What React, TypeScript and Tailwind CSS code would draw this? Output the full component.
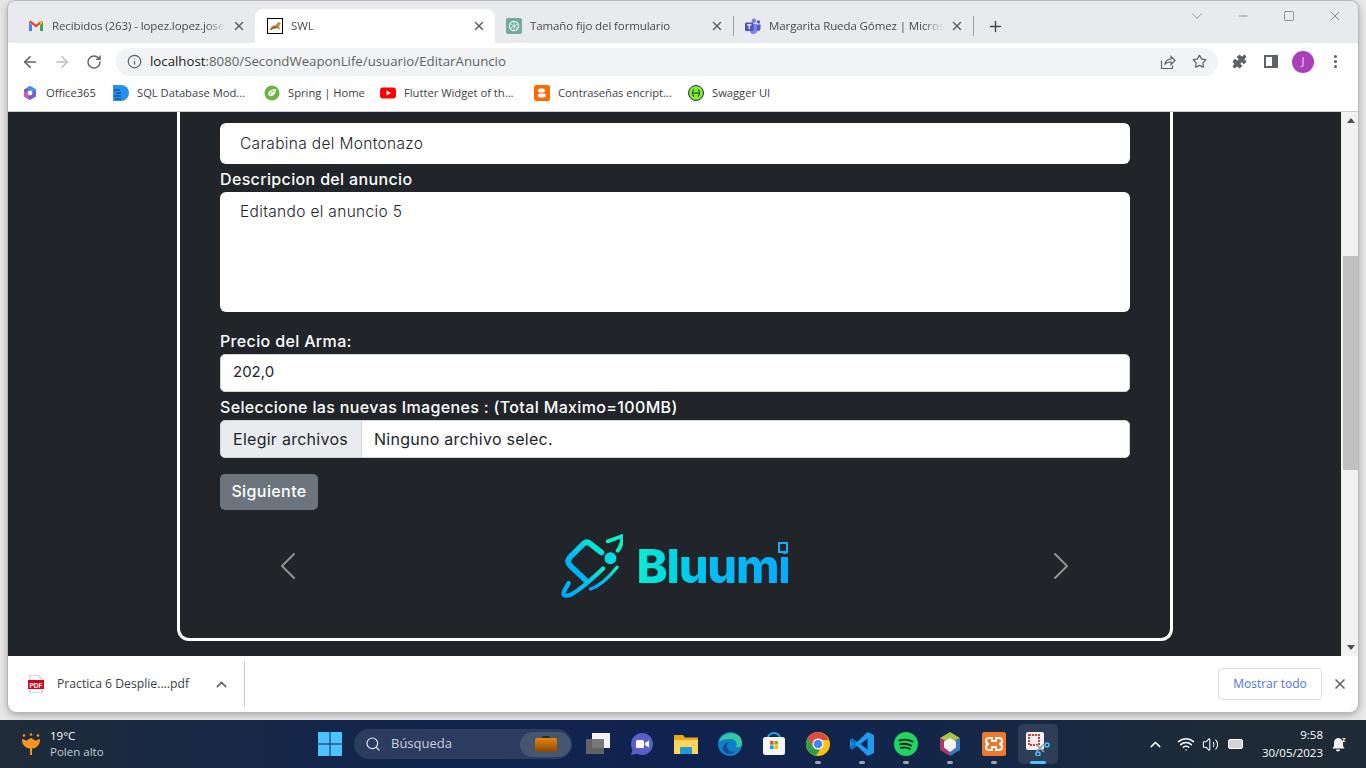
import React from "react";
import {
  ArrowLeft,
  ArrowRight,
  ChevronDown,
  ChevronUp,
  Info,
  Minus,
  MoreVertical,
  Plus,
  Puzzle,
  RotateCw,
  Search,
  Square,
  Star,
  Volume2,
  Wifi,
  X,
} from "lucide-react";

const tabs = [
  { title: "Recibidos (263) - lopez.lopez.jose", icon: "gmail", sep: false, box: "w-[238px] pl-[11px] pr-[9px]" },
  { title: "SWL", icon: "tomcat", sep: false, box: "w-[240px] rounded-t-lg bg-white pl-[12px] pr-[9px]" },
  { title: "Tamaño fijo del formulario", icon: "gpt", sep: true, box: "w-[238px] pl-[11px] pr-[10px]" },
  { title: "Margarita Rueda Gómez | Microsoft Teams", icon: "teams", sep: true, box: "w-[240px] pl-[12px] pr-[10px]" },
];

const bookmarks = [
  { title: "Office365", icon: "office", width: "w-[51px]" },
  { title: "SQL Database Mod...", icon: "sql", width: "w-[111px]" },
  { title: "Spring | Home", icon: "spring", width: "w-[76px]" },
  { title: "Flutter Widget of th...", icon: "youtube", width: "w-[114px]" },
  { title: "Contraseñas encript...", icon: "blogger", width: "w-[114px]" },
  { title: "Swagger UI", icon: "swagger", width: "w-[60px]" },
];

function Favicon({ name }: { name: string }) {
  switch (name) {
    case "gmail":
      return (
        <svg viewBox="0 0 16 16" className="h-4 w-4 shrink-0">
          <path d="M1 4v9h3V7z" fill="#4285f4" />
          <path d="M12 7v6h3V4z" fill="#34a853" />
          <path d="M1 4l7 5.5L15 4l-1.5-1.5L8 6.5 2.5 2.5z" fill="#ea4335" />
          <path d="M12 4.2l1.5-1.7L15 4l-3 3z" fill="#fbbc04" />
        </svg>
      );
    case "tomcat":
      return (
        <svg viewBox="0 0 16 16" className="h-4 w-4 shrink-0">
          <rect x="0.5" y="0.5" width="15" height="15" fill="#fff" stroke="#000" />
          <path d="M2 12l3-4 4-1 2-3 3 1-2 3 1 4-3-2-3 1z" fill="#b8893e" />
          <path d="M4 12l3-3 3 1" stroke="#6b5a30" fill="none" />
        </svg>
      );
    case "gpt":
      return (
        <svg viewBox="0 0 16 16" className="h-4 w-4 shrink-0">
          <rect width="16" height="16" rx="2" fill="#74aa9c" />
          <circle cx="8" cy="8" r="4.6" fill="none" stroke="#e6f2ef" strokeWidth="1.3" />
          <path d="M8 3.5v9M4 5.7l8 4.6M12 5.7l-8 4.6" stroke="#e6f2ef" strokeWidth="0.8" />
        </svg>
      );
    case "teams":
      return (
        <svg viewBox="0 0 16 16" className="h-4 w-4 shrink-0">
          <circle cx="9" cy="2.8" r="2.3" fill="#7b83eb" />
          <circle cx="13.5" cy="4" r="1.7" fill="#5059c9" />
          <path d="M11 6.5h4.5v4.2a2.4 2.4 0 01-4.5 1z" fill="#5059c9" />
          <path d="M4.5 6h7.5v6.2a3.4 3.4 0 01-7 .8z" fill="#7b83eb" />
          <rect x="0" y="4.5" width="8.5" height="8.5" rx="1" fill="#4b53bc" />
          <path d="M2 6.8h4.5M4.25 6.8v4.4" stroke="#fff" strokeWidth="1.2" />
        </svg>
      );
    case "office":
      return (
        <svg viewBox="0 0 16 16" className="h-4 w-4 shrink-0">
          <path d="M8 1l6 3.5v7L8 15l-6-3.5v-7z" fill="#7b5ad6" />
          <path d="M8 1l6 3.5L10 7 5 3z" fill="#3a9be8" />
          <path d="M2 11.5V6l4 3v3.5L8 15z" fill="#d65bb0" />
          <circle cx="8" cy="8" r="2.4" fill="#fff" />
        </svg>
      );
    case "sql":
      return (
        <svg viewBox="0 0 16 16" className="h-4 w-4 shrink-0">
          <circle cx="8" cy="8" r="8" fill="#2490f0" />
          <rect x="0" y="0" width="8" height="16" fill="#2490f0" />
          <path d="M1 5h6M3 8h5M1 11h7M2 14h6" stroke="#123a70" strokeWidth="1" />
        </svg>
      );
    case "spring":
      return (
        <svg viewBox="0 0 16 16" className="h-4 w-4 shrink-0">
          <circle cx="8" cy="8" r="7.5" fill="#6db33f" />
          <path d="M4 11c-1-4 3-7 8-7 0 5-3 8-7 7" fill="#fff" />
          <path d="M4 12c1-3 3-5 6-6" stroke="#6db33f" fill="none" />
        </svg>
      );
    case "youtube":
      return (
        <svg viewBox="0 0 16 16" className="h-4 w-4 shrink-0">
          <rect y="2.5" width="16" height="11" rx="3" fill="#f00" />
          <path d="M6.5 5.5v5L11 8z" fill="#fff" />
        </svg>
      );
    case "blogger":
      return (
        <svg viewBox="0 0 16 16" className="h-4 w-4 shrink-0">
          <rect width="16" height="16" rx="2.5" fill="#ff6a00" />
          <rect x="4" y="3.5" width="7" height="4" rx="2" fill="#fff" />
          <rect x="4" y="8.5" width="8" height="4" rx="2" fill="#fff" />
        </svg>
      );
    default:
      return (
        <svg viewBox="0 0 16 16" className="h-4 w-4 shrink-0">
          <circle cx="8" cy="8" r="7.5" fill="#85ea2d" stroke="#173647" />
          <path d="M6 4.5c-2 0 0 3.5-2 3.5 2 0 0 3.5 2 3.5M10 4.5c2 0 0 3.5 2 3.5-2 0 0 3.5-2 3.5M4.5 8h7" stroke="#173647" fill="none" />
        </svg>
      );
  }
}

function TabStrip() {
  return (
    <div className="flex h-[42px] shrink-0 items-end bg-[#e8eaed] pl-[9px]">
      {tabs.map((t) => (
        <div key={t.title} className={"flex h-[34px] items-center " + t.box}>
          <Favicon name={t.icon} />
          <span className="ml-[8px] flex-1 overflow-hidden text-[11.5px] tracking-[-0.1px] whitespace-nowrap text-[#45494e] [mask-image:linear-gradient(90deg,#000_88%,transparent)]">
            {t.title}
          </span>
          <X className="ml-[6px] h-[14px] w-[14px] shrink-0 text-[#5f6368]" strokeWidth={2.5} />
          {t.sep && <span className="mr-[-11px] ml-[9px] h-[20px] w-px bg-[#9aa0a6]" />}
        </div>
      ))}
      <div className="flex h-[34px] w-[44px] items-center justify-center">
        <Plus className="h-[17px] w-[17px] text-[#45494e]" strokeWidth={2} />
      </div>
      <div className="flex h-[42px] flex-1 items-start justify-end">
        <div className="flex h-[30px] w-[46px] items-center justify-center">
          <ChevronDown className="h-[18px] w-[18px] text-[#7b7d80]" strokeWidth={1} />
        </div>
        <div className="flex h-[30px] w-[46px] items-center justify-center">
          <Minus className="h-[14px] w-[14px] text-[#55585c]" strokeWidth={1} />
        </div>
        <div className="flex h-[30px] w-[46px] items-center justify-center">
          <Square className="h-[12px] w-[12px] text-[#55585c]" strokeWidth={1.2} />
        </div>
        <div className="flex h-[30px] w-[46px] items-center justify-center">
          <X className="h-[16px] w-[16px] text-[#55585c]" strokeWidth={1} />
        </div>
      </div>
    </div>
  );
}

function Toolbar() {
  return (
    <div className="flex h-[37px] shrink-0 items-center bg-white pl-[13px] text-[#5f6368]">
      <ArrowLeft className="h-[18px] w-[18px]" strokeWidth={2.2} />
      <ArrowRight className="ml-[14px] h-[18px] w-[18px] text-[#bdc1c6]" strokeWidth={2.2} />
      <RotateCw className="ml-[15px] h-[16px] w-[16px]" strokeWidth={2.2} />
      <div className="ml-[14px] flex h-[28px] w-[1102px] items-center rounded-full bg-[#f1f3f4] pr-[11px] pl-[11px]">
        <Info className="h-[15px] w-[15px]" strokeWidth={2} />
        <span className="ml-[8px] flex-1 text-[13.25px] text-[#5f6368]">
          <span className="text-[#202124]">localhost</span>:8080/SecondWeaponLife/usuario/EditarAnuncio
        </span>
        <svg viewBox="0 0 16 16" className="h-[16px] w-[16px]" fill="none" stroke="#5f6368" strokeWidth="1.2">
          <path d="M1.5 6.5v8h11v-3M5 10c.5-3 3-5 6-5V2.500l4 4-4 4V8c-2.500 0-4.500.5-6 2z" />
        </svg>
        <Star className="ml-[16px] h-[15px] w-[15px]" strokeWidth={2} />
      </div>
      <Puzzle className="ml-[14px] h-[15px] w-[15px] fill-[#5f6368]" strokeWidth={1.5} />
      <div className="ml-[17px] flex h-[13px] w-[14px] justify-end border-[2px] border-[#5f6368]">
        <div className="h-full w-[4px] bg-[#5f6368]" />
      </div>
      <div className="ml-[14px] flex h-[22px] w-[22px] items-center justify-center rounded-full bg-[#a93fbb] text-[11px] text-[#f3d9f7]">
        J
      </div>
      <MoreVertical className="ml-[13px] h-[17px] w-[17px]" strokeWidth={2.4} />
    </div>
  );
}

function BookmarkBar() {
  return (
    <div className="flex h-[32px] shrink-0 items-center gap-[16px] border-b border-[#c9cbcf] bg-white pb-[5px] pl-[14px]">
      {bookmarks.map((b) => (
        <div key={b.title} className="flex items-center gap-[8px]">
          <Favicon name={b.icon} />
          <span className={"text-[11.2px] whitespace-nowrap text-[#3c4043] " + b.width}>{b.title}</span>
        </div>
      ))}
    </div>
  );
}

function BluumiLogo() {
  return (
    <div className="mr-[2px] flex h-[66px] items-center">
      <svg viewBox="60 40 190 200" className="h-[67px] w-[63px]" fill="none" strokeLinecap="round" strokeLinejoin="round">
        <defs>
          <linearGradient id="rocket" x1="0" y1="1" x2="1" y2="0">
            <stop offset="0" stopColor="#00a4ff" />
            <stop offset="0.55" stopColor="#00c8f0" />
            <stop offset="1" stopColor="#0cf0c8" />
          </linearGradient>
        </defs>
        <path d="M185 98L152 72Q140 62 130 72L90 112Q78 125 90 137L136 180" stroke="url(#rocket)" strokeWidth="17" />
        <path d="M86 190L72 215Q66 232 86 227Q112 220 190 146" stroke="url(#rocket)" strokeWidth="13" />
        <path d="M152 208Q190 195 232 142" stroke="url(#rocket)" strokeWidth="10" />
        <path d="M204 64L248 48Q248 75 234 92" stroke="#10ecc8" strokeWidth="12" />
        <circle cx="212" cy="115" r="18" fill="#08d8e0" />
      </svg>
      <div className="relative ml-[14px] h-[66px] w-[151px]">
        <span className="block bg-linear-to-r from-[#0cecd4] via-[#06bdf4] to-[#08aaff] bg-clip-text text-[47px] leading-[66px] font-extrabold tracking-[-1.2px] text-transparent">
          Bluumi
        </span>
        <span className="absolute top-[9px] right-0 h-[11px] w-[10px] border-[2px] border-[#18acf0] bg-[#212529]" />
      </div>
    </div>
  );
}

function CarouselArrow({ d }: { d: string }) {
  return (
    <svg viewBox="0 0 16 16" className="h-[32px] w-[32px] fill-white/50">
      <path d={d} />
    </svg>
  );
}

function FormCard() {
  return (
    <div className="ml-[169px] flex h-[529px] w-[996px] flex-col rounded-b-xl border-x-[3px] border-b-[3px] border-white px-[40px] pt-[11px] font-['Inter',sans-serif] text-white">
      <div className="flex h-[41px] items-center rounded-md bg-white pl-[20px] text-[15.5px] font-light tracking-[0.33px] text-[#212529]">
        Carabina del Montonazo
      </div>
      <label className="mt-[4px] text-[16px] leading-[23px] font-[450] tracking-[0.35px]">Descripcion del anuncio</label>
      <div className="mt-[1px] h-[120px] rounded-md bg-white pt-[8px] pl-[20px] text-[15.5px] font-light tracking-[0.33px] text-[#212529]">
        Editando el anuncio 5
      </div>
      <label className="mt-[18px] text-[16px] leading-[23px] font-[450] tracking-[0.35px]">Precio del Arma:</label>
      <div className="mt-[1px] flex h-[38px] items-center rounded-[5px] border border-[#ced4da] bg-white pb-[1px] pl-[12px] text-[15px] text-[#212529]">
        202,0
      </div>
      <label className="mt-[4px] text-[16px] leading-[23px] font-[450] tracking-[0.35px]">
        Seleccione las nuevas Imagenes : (Total Maximo=100MB)
      </label>
      <div className="mt-[1px] flex h-[38px] items-stretch overflow-hidden rounded-[5px] border border-[#ced4da] bg-white text-[16px] tracking-[0.27px] text-[#212529]">
        <div className="flex w-[141px] items-center border-r border-[#ced4da] bg-[#e9ecef] pb-[1px] pl-[12px]">
          Elegir archivos
        </div>
        <div className="flex items-center pb-[1px] pl-[12px]">Ninguno archivo selec.</div>
      </div>
      <button className="mt-[16px] h-[36px] w-[98px] rounded-[5px] bg-[#6c757d] pb-[2px] text-center text-[16px] font-[450] tracking-[0.4px] text-white">
        Siguiente
      </button>
      <div className="mt-[23px] flex items-center justify-between pr-[53px] pl-[52px]">
        <CarouselArrow d="M11.354 1.646a.5.5 0 0 1 0 .708L5.707 8l5.647 5.646a.5.5 0 0 1-.708.708l-6-6a.5.5 0 0 1 0-.708l6-6a.5.5 0 0 1 .708 0z" />
        <BluumiLogo />
        <CarouselArrow d="M4.646 1.646a.5.5 0 0 1 .708 0l6 6a.5.5 0 0 1 0 .708l-6 6a.5.5 0 0 1-.708-.708L10.293 8 4.646 2.354a.5.5 0 0 1 0-.708z" />
      </div>
    </div>
  );
}

function Scrollbar() {
  return (
    <div className="flex w-[17px] shrink-0 flex-col items-end bg-[#f1f1f1]">
      <div className="flex h-[17px] w-[15px] items-center justify-center">
        <div className="h-0 w-0 border-x-[4px] border-b-[5px] border-x-transparent border-b-[#505050]" />
      </div>
      <div className="mt-[127px] h-[214px] w-[15px] bg-[#c1c1c1]" />
      <div className="flex-1" />
      <div className="flex h-[17px] w-[15px] items-center justify-center">
        <div className="h-0 w-0 border-x-[4px] border-t-[5px] border-x-transparent border-t-[#505050]" />
      </div>
    </div>
  );
}

function DownloadBar() {
  return (
    <div className="flex h-[56px] shrink-0 items-center rounded-b-lg bg-white pl-[20px]">
      <svg viewBox="0 0 16 18" className="h-[18px] w-[16px]">
        <path d="M2 0h8l4 4v14H2z" fill="#fff" stroke="#b9b9b9" />
        <rect x="0" y="5" width="16" height="9" fill="#d8001c" />
        <text x="8" y="12.5" textAnchor="middle" fontSize="6.5" fontWeight="700" fill="#fff" fontFamily="Liberation Sans">
          PDF
        </text>
      </svg>
      <span className="ml-[13px] w-[140px] text-[12.2px] whitespace-nowrap text-[#3c4043]">Practica 6 Desplie....pdf</span>
      <ChevronUp className="ml-[16px] h-[17px] w-[17px] text-[#5f6368]" strokeWidth={2.2} />
      <div className="ml-[14px] h-[44px] w-px bg-[#c8c9cb]" />
      <div className="flex-1" />
      <div className="flex h-[32px] w-[104px] items-center justify-center rounded-[4px] border border-[#dadce0] text-[12px] font-medium text-[#4e72e8]">
        Mostrar todo
      </div>
      <X className="mr-[10px] ml-[10px] h-[16px] w-[16px] text-[#5f6368]" strokeWidth={2.5} />
    </div>
  );
}

function TaskIcon({ dot, active, children }: { dot?: boolean; active?: boolean; children: React.ReactNode }) {
  return (
    <div
      className={
        active
          ? "relative ml-[2px] flex h-[40px] w-[40px] items-center justify-center rounded-[5px] bg-white/10"
          : "relative flex h-[40px] w-[44px] items-center justify-center"
      }
    >
      {children}
      {dot && <span className="absolute bottom-0 h-[3px] w-[6px] rounded-full bg-[#9ba4b0]" />}
      {active && <span className="absolute bottom-0 h-[3px] w-[16px] rounded-full bg-[#4cc2ff]" />}
    </div>
  );
}

function Taskbar() {
  return (
    <div className="flex h-[48px] shrink-0 items-center bg-[linear-gradient(90deg,#202c39_0%,#14264a_22%,#0f2350_50%,#142747_72%,#1e2a36_90%)] pl-[22px] text-white">
      <svg viewBox="0 0 18 22" className="h-[22px] w-[18px]">
        <circle cx="2" cy="2.5" r="1.3" fill="#f7931e" />
        <circle cx="9" cy="1.5" r="1.3" fill="#f7931e" />
        <circle cx="16" cy="2.5" r="1.3" fill="#f7931e" />
        <path d="M0 6c2 0 2.500 1.500 4.500 1.500S7 5 9 5s2.500 2.500 4.500 2.500S16 6 18 6c0 6-3 9-8 9.500V22H8v-6.500C3 15 0 12 0 6z" fill="#f7931e" />
      </svg>
      <div className="ml-[10px] w-[268px] text-[11.5px] leading-[16px]">
        <div>19°C</div>
        <div className="text-[#c8ccd2]">Polen alto</div>
      </div>
      <svg viewBox="0 0 24 24" className="h-[24px] w-[24px]">
        <path d="M0 0h11.500v11.500H0zM12.500 0H24v11.500H12.500zM0 12.500h11.500V24H0zM12.500 12.500H24V24H12.500z" fill="#4cc2ff" />
      </svg>
      <div className="ml-[12px] flex h-[30px] w-[218px] items-center rounded-full bg-[#2c3b60] pl-[11px]">
        <Search className="h-[16px] w-[16px] text-[#e4e7ec]" strokeWidth={1.8} />
        <span className="ml-[10px] w-[129px] text-[13px] text-[#cdd2da]">Búsqueda</span>
        <div className="flex h-[25px] w-[51px] flex-col items-center justify-center rounded-full bg-[#45566e]">
          <div className="h-[2px] w-[8px] rounded-t-[2px] bg-[#2a2a2a]" />
          <div className="h-[14px] w-[22px] rounded-[2px] bg-linear-to-b from-[#e8860f] to-[#8a4a08]" />
        </div>
      </div>
      <div className="ml-[4px] flex items-center">
        <TaskIcon>
          <svg viewBox="0 0 24 22" className="h-[22px] w-[24px]">
            <rect x="6" y="0" width="18" height="15" fill="#f3f3f3" />
            <rect x="0" y="6" width="18" height="15" fill="#6a6a6a" opacity="0.9" />
          </svg>
        </TaskIcon>
        <TaskIcon>
          <svg viewBox="0 0 24 24" className="h-[24px] w-[24px]">
            <path d="M12 1a11 11 0 11-5 20.800L1 23l1.500-5.500A11 11 0 0112 1z" fill="#5b5fc7" />
            <rect x="6" y="8" width="8" height="8" rx="1.500" fill="#fff" />
            <path d="M15 11l4-2.500v7L15 13z" fill="#fff" />
          </svg>
        </TaskIcon>
        <TaskIcon>
          <svg viewBox="0 0 24 22" className="h-[22px] w-[24px]">
            <path d="M0 2h9l2 2.500h13V21H0z" fill="#e8a818" />
            <rect x="0" y="7" width="24" height="14" fill="#ffd45c" />
            <rect x="6" y="14" width="12" height="7" rx="1" fill="#1b9ad6" />
          </svg>
        </TaskIcon>
        <TaskIcon>
          <svg viewBox="0 0 24 24" className="h-[24px] w-[24px]">
            <circle cx="12" cy="12" r="12" fill="#0f7fc8" />
            <path d="M1 10C3 2 13-1 20 3c3 2 4 5 4 9 0 3-3 4-6 3 2-4-1-8-6-8-5 0-9 1-11 3z" fill="#35c8a0" />
            <path d="M9 14c0 4 4 7 9 5-5 5-12 3-13-2 0-4 3-7 7-7-2 1-3 2-3 4z" fill="#0b4f9a" />
          </svg>
        </TaskIcon>
        <TaskIcon>
          <svg viewBox="0 0 24 24" className="h-[24px] w-[24px]">
            <path d="M6 6a6 5 0 0112 0" fill="none" stroke="#2aa5e0" strokeWidth="2" />
            <rect x="1" y="5" width="22" height="18" rx="2.500" fill="#f5f5f5" />
            <rect x="8" y="9" width="3.600" height="3.600" fill="#f25022" />
            <rect x="12.400" y="9" width="3.600" height="3.600" fill="#7fba00" />
            <rect x="8" y="13.400" width="3.600" height="3.600" fill="#00a4ef" />
            <rect x="12.400" y="13.400" width="3.600" height="3.600" fill="#ffb900" />
          </svg>
        </TaskIcon>
        <TaskIcon dot>
          <svg viewBox="0 0 24 24" className="h-[24px] w-[24px]">
            <circle cx="12" cy="12" r="12" fill="#fbc116" />
            <path d="M12 0a12 12 0 00-10.400 6L7 15l5-7h10.400A12 12 0 0012 0z" fill="#dd4b3e" />
            <path d="M1.600 6A12 12 0 0010 23.800L15.500 15 7 15z" fill="#2f9e49" />
            <circle cx="12" cy="12" r="5.500" fill="#fff" />
            <circle cx="12" cy="12" r="4.300" fill="#4285f4" />
          </svg>
        </TaskIcon>
        <TaskIcon dot>
          <svg viewBox="0 0 24 24" className="h-[24px] w-[24px]">
            <path d="M17.500 0L24 3v18l-6.500 3L7 14l-4.500 3.500L0 16V8l2.500-1.500L7 10z" fill="#1f9cf0" />
            <path d="M17.500 6.500L10.500 12l7 5.500z" fill="#0f2350" />
            <path d="M0 8l2.500-1.500L7 10l-2.500 2 2.500 2-4.500 3.500L0 16l2.500-4z" fill="#0a6fc0" />
          </svg>
        </TaskIcon>
        <TaskIcon dot>
          <svg viewBox="0 0 24 24" className="h-[24px] w-[24px]">
            <circle cx="12" cy="12" r="12" fill="#1ed760" />
            <path d="M5.500 8.500c4.500-1.500 9-1 13 1M6 12.300c4-1 7.500-.7 11 1.200M6.800 15.800c3.300-.8 6.200-.5 9 1" fill="none" stroke="#10201a" strokeWidth="1.900" strokeLinecap="round" />
          </svg>
        </TaskIcon>
        <TaskIcon dot>
          <svg viewBox="0 0 24 24" className="h-[24px] w-[24px]">
            <path d="M12 0l10 6-10 6L2 6z" fill="#a8c34a" />
            <path d="M2 6l10 6v12L2 18z" fill="#a83a6a" />
            <path d="M22 6l-10 6v12l10-6z" fill="#3a78c2" />
            <path d="M12 6l6 3.500v6L12 20l-6-4.500v-6z" fill="#f3f3f3" />
          </svg>
        </TaskIcon>
        <TaskIcon dot>
          <svg viewBox="0 0 24 24" className="h-[24px] w-[24px]">
            <rect width="24" height="24" rx="2.500" fill="#f0772b" />
            <path d="M7 6h3v3h4V6h3a3 3 0 010 6 3 3 0 010 6h-3v-3h-4v3H7a3 3 0 010-6 3 3 0 010-6z" fill="none" stroke="#fff" strokeWidth="2" />
          </svg>
        </TaskIcon>
        <TaskIcon active>
          <svg viewBox="0 0 24 24" className="h-[24px] w-[24px]">
            <rect x="0" y="0" width="18" height="18" rx="2" fill="#f1f1f1" />
            <rect x="3" y="3" width="10" height="10" fill="none" stroke="#d83b2b" strokeWidth="2" strokeDasharray="2 1" />
            <path d="M10 12l8 8M18 12l-8 8" stroke="#8a98a8" strokeWidth="1.500" />
            <circle cx="21" cy="13" r="2" fill="none" stroke="#4cc2ff" strokeWidth="1.500" />
            <circle cx="12" cy="22" r="2" fill="none" stroke="#4cc2ff" strokeWidth="1.500" />
          </svg>
        </TaskIcon>
      </div>
      <div className="flex-1" />
      <ChevronUp className="h-[17px] w-[17px]" strokeWidth={2} />
      <Wifi className="ml-[13px] h-[18px] w-[18px]" strokeWidth={2} />
      <Volume2 className="ml-[7px] h-[17px] w-[17px]" strokeWidth={1.5} />
      <div className="ml-[9px] flex h-[10px] w-[15px] items-center rounded-[2px] border border-white bg-white/80" />
      <div className="ml-[10px] w-[70px] text-right text-[11.5px] leading-[18px]">
        <div>9:58</div>
        <div>30/05/2023</div>
      </div>
      <svg viewBox="0 0 16 16" className="mr-[19px] ml-[8px] h-[16px] w-[16px]" fill="#f3f3f3">
        <path d="M7 2a5 5 0 00-4 5v3l-1.500 2.500h12L12 10V7a5 5 0 00-5-5zM5 13.500a2 2 0 004 0z" />
        <text x="11" y="6" fontSize="7" fontWeight="700" fontFamily="Open Sans">
          z
        </text>
      </svg>
    </div>
  );
}

export default function App() {
  return (
    <div className="flex h-[768px] w-[1366px] flex-col overflow-hidden bg-[#cfcfcf] font-['Open_Sans',sans-serif]">
      <div className="h-[720px] shrink-0 bg-[#e8e8e8] px-[8px] pt-px pb-[8px]">
        <div className="flex h-[711px] flex-col overflow-hidden rounded-lg shadow-[0_0_0_1px_#b8b8b8,0_2px_8px_rgba(0,0,0,0.35)]">
          <TabStrip />
          <Toolbar />
          <BookmarkBar />
          <div className="flex h-[544px] shrink-0 overflow-hidden bg-[#212529]">
            <div className="flex-1">
              <FormCard />
            </div>
            <Scrollbar />
          </div>
          <DownloadBar />
        </div>
      </div>
      <Taskbar />
    </div>
  );
}
